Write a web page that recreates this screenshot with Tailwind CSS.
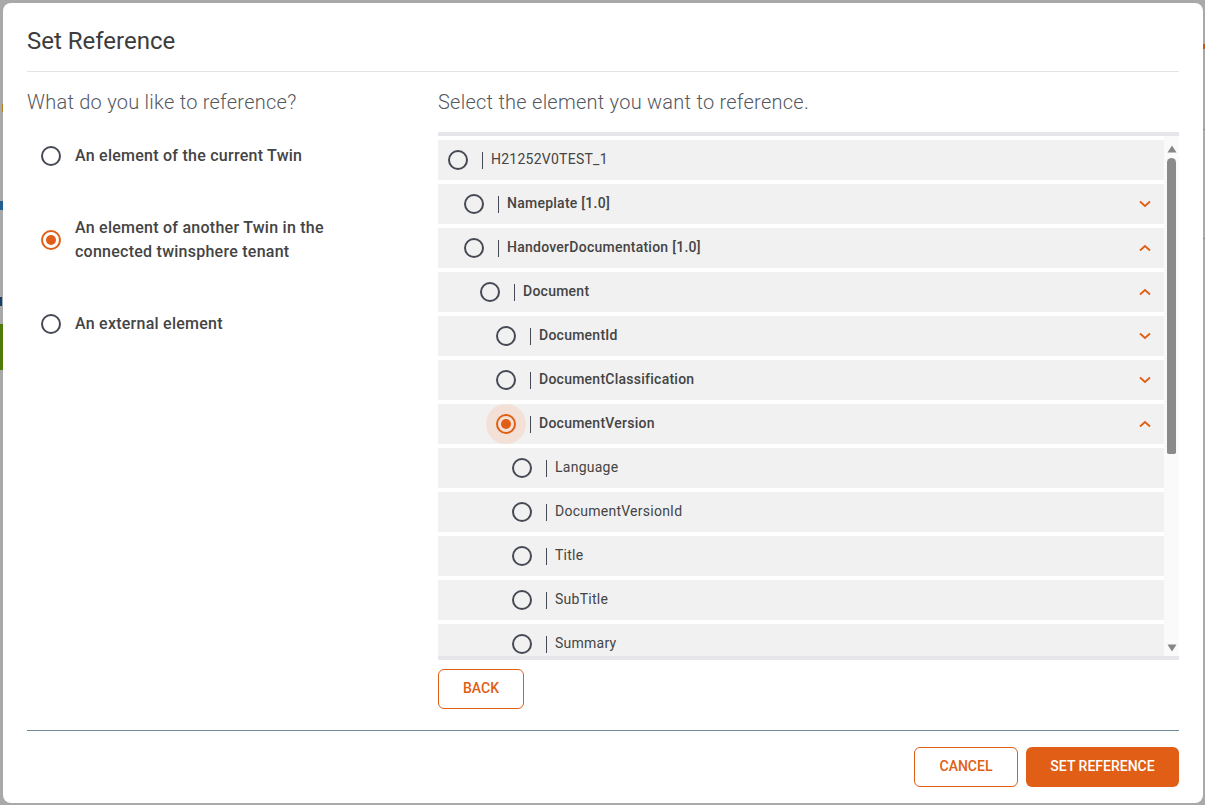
<!DOCTYPE html>
<html lang="en">
  <head>
    <meta charset="UTF-8" />
    <title>Set Reference</title>
    <script src="https://cdn.jsdelivr.net/npm/@tailwindcss/browser@4"></script>
  </head>
  <body class="bg-[#a9a9a9] font-['Roboto',sans-serif] text-[#444444] overflow-hidden">
    <!-- page behind the overlay -->
    <div class="absolute left-[2px] top-[104px] w-px h-[8px] bg-[#b5791f]"></div>
    <div class="absolute left-0 top-[201px] w-[3px] h-[9px] bg-[#1f5f94]"></div>
    <div class="absolute left-0 top-[297px] w-[2px] h-[9px] bg-[#14406a]"></div>
    <div class="absolute left-0 top-[324px] w-[3px] h-[46px] bg-[#4f7a0a]"></div>
    <div class="absolute left-[1203px] top-[44px] w-[2px] h-[5px] bg-[#c2561c]"></div>
    <div class="absolute left-[1203px] top-[129px] w-[2px] h-px bg-[#8f8f8f]"></div>
    <div class="absolute left-[1203px] top-[238px] w-[2px] h-px bg-[#8f8f8f]"></div>

    <div class="p-[3px] h-[805px] w-[1205px] flex">
      <div class="relative shrink-0 w-[1200px] h-[800px] bg-white rounded-[8px] px-6 flex flex-col">
        <h2 class="h-[69px] border-b border-[#e3e3e3] text-[24px] leading-[76px] text-[#3c3c3c]">Set Reference</h2>

        <div class="flex flex-1 min-h-0">
          <!-- left column -->
          <div class="w-[411px] shrink-0">
            <p class="mt-[18px] text-[20px] leading-6 font-light tracking-[0.25px] text-[#55585f]">What do you like to reference?</p>
            <div class="mt-[30px] flex items-center h-6 pl-[14px]">
              <span class="w-5 h-5 rounded-full border-2 border-[#454a54]"></span>
              <span class="ml-[14px] text-[16px] leading-6 font-medium tracking-[0.25px]">An element of the current Twin</span>
            </div>
            <div class="mt-[48px] flex items-center pl-[14px]">
              <span class="w-5 h-5 rounded-full border-2 border-[#e05e15] flex items-center justify-center"><span class="w-[10px] h-[10px] rounded-full bg-[#e05e15]"></span></span>
              <span class="ml-[14px] w-[290px] text-[16px] leading-6 font-medium tracking-[0.25px]">An element of another Twin in the connected twinsphere tenant</span>
            </div>
            <div class="mt-[48px] flex items-center h-6 pl-[14px]">
              <span class="w-5 h-5 rounded-full border-2 border-[#454a54]"></span>
              <span class="ml-[14px] text-[16px] leading-6 font-medium tracking-[0.25px]">An external element</span>
            </div>
          </div>

          <!-- right column -->
          <div class="flex-1 min-w-0 flex flex-col">
            <p class="mt-[18px] text-[20px] leading-6 font-light tracking-[0.25px] text-[#55585f]">Select the element you want to reference.</p>

            <div class="mt-[18px] flex h-[528px] border-y-4 border-[#e6e6ea]">
              <div class="flex-1 min-w-0 overflow-hidden pt-1 flex flex-col gap-1 text-[14px] tracking-[0.25px]">
                <div class="h-10 shrink-0 flex items-center bg-[#f1f1f1]">
                  <span class="w-10 h-10 flex items-center justify-center"><span class="w-5 h-5 rounded-full border-2 border-[#454a54]"></span></span>
                  <span class="ml-1 w-px h-[17px] bg-[#454a54]"></span>
                  <span class="ml-2 mb-[2px]">H21252V0TEST_1</span>
                </div>
                <div class="h-10 shrink-0 flex items-center bg-[#f1f1f1] pl-4 pr-[13px]">
                  <span class="w-10 h-10 flex items-center justify-center"><span class="w-5 h-5 rounded-full border-2 border-[#454a54]"></span></span>
                  <span class="ml-1 w-px h-[17px] bg-[#454a54]"></span>
                  <span class="ml-2 mb-[2px] font-medium">Nameplate [1.0]</span>
                  <svg class="ml-auto" width="12" height="8" viewBox="0 0 12 8" fill="none" stroke="#e05e15" stroke-width="1.8"><path d="M1 1.5 6 6l5-4.500"/></svg>
                </div>
                <div class="h-10 shrink-0 flex items-center bg-[#f1f1f1] pl-4 pr-[13px]">
                  <span class="w-10 h-10 flex items-center justify-center"><span class="w-5 h-5 rounded-full border-2 border-[#454a54]"></span></span>
                  <span class="ml-1 w-px h-[17px] bg-[#454a54]"></span>
                  <span class="ml-2 mb-[2px] font-medium">HandoverDocumentation [1.0]</span>
                  <svg class="ml-auto" width="12" height="8" viewBox="0 0 12 8" fill="none" stroke="#e05e15" stroke-width="1.8"><path d="M1 6.500 6 2l5 4.500"/></svg>
                </div>
                <div class="h-10 shrink-0 flex items-center bg-[#f1f1f1] pl-8 pr-[13px]">
                  <span class="w-10 h-10 flex items-center justify-center"><span class="w-5 h-5 rounded-full border-2 border-[#454a54]"></span></span>
                  <span class="ml-1 w-px h-[17px] bg-[#454a54]"></span>
                  <span class="ml-2 mb-[2px] font-medium">Document</span>
                  <svg class="ml-auto" width="12" height="8" viewBox="0 0 12 8" fill="none" stroke="#e05e15" stroke-width="1.8"><path d="M1 6.500 6 2l5 4.500"/></svg>
                </div>
                <div class="h-10 shrink-0 flex items-center bg-[#f1f1f1] pl-12 pr-[13px]">
                  <span class="w-10 h-10 flex items-center justify-center"><span class="w-5 h-5 rounded-full border-2 border-[#454a54]"></span></span>
                  <span class="ml-1 w-px h-[17px] bg-[#454a54]"></span>
                  <span class="ml-2 mb-[2px] font-medium">DocumentId</span>
                  <svg class="ml-auto" width="12" height="8" viewBox="0 0 12 8" fill="none" stroke="#e05e15" stroke-width="1.8"><path d="M1 1.5 6 6l5-4.500"/></svg>
                </div>
                <div class="h-10 shrink-0 flex items-center bg-[#f1f1f1] pl-12 pr-[13px]">
                  <span class="w-10 h-10 flex items-center justify-center"><span class="w-5 h-5 rounded-full border-2 border-[#454a54]"></span></span>
                  <span class="ml-1 w-px h-[17px] bg-[#454a54]"></span>
                  <span class="ml-2 mb-[2px] font-medium">DocumentClassification</span>
                  <svg class="ml-auto" width="12" height="8" viewBox="0 0 12 8" fill="none" stroke="#e05e15" stroke-width="1.8"><path d="M1 1.5 6 6l5-4.500"/></svg>
                </div>
                <div class="h-10 shrink-0 flex items-center bg-[#f1f1f1] pl-12 pr-[13px]">
                  <span class="w-10 h-10 rounded-full bg-[#f3e1d7] flex items-center justify-center"><span class="w-5 h-5 rounded-full border-2 border-[#e05e15] flex items-center justify-center"><span class="w-[10px] h-[10px] rounded-full bg-[#e05e15]"></span></span></span>
                  <span class="ml-1 w-px h-[17px] bg-[#454a54]"></span>
                  <span class="ml-2 mb-[2px] font-medium">DocumentVersion</span>
                  <svg class="ml-auto" width="12" height="8" viewBox="0 0 12 8" fill="none" stroke="#e05e15" stroke-width="1.8"><path d="M1 6.500 6 2l5 4.500"/></svg>
                </div>
                <div class="h-10 shrink-0 flex items-center bg-[#f1f1f1] pl-16">
                  <span class="w-10 h-10 flex items-center justify-center"><span class="w-5 h-5 rounded-full border-2 border-[#454a54]"></span></span>
                  <span class="ml-1 w-px h-[17px] bg-[#454a54]"></span>
                  <span class="ml-2 mb-[2px]">Language</span>
                </div>
                <div class="h-10 shrink-0 flex items-center bg-[#f1f1f1] pl-16">
                  <span class="w-10 h-10 flex items-center justify-center"><span class="w-5 h-5 rounded-full border-2 border-[#454a54]"></span></span>
                  <span class="ml-1 w-px h-[17px] bg-[#454a54]"></span>
                  <span class="ml-2 mb-[2px]">DocumentVersionId</span>
                </div>
                <div class="h-10 shrink-0 flex items-center bg-[#f1f1f1] pl-16">
                  <span class="w-10 h-10 flex items-center justify-center"><span class="w-5 h-5 rounded-full border-2 border-[#454a54]"></span></span>
                  <span class="ml-1 w-px h-[17px] bg-[#454a54]"></span>
                  <span class="ml-2 mb-[2px]">Title</span>
                </div>
                <div class="h-10 shrink-0 flex items-center bg-[#f1f1f1] pl-16">
                  <span class="w-10 h-10 flex items-center justify-center"><span class="w-5 h-5 rounded-full border-2 border-[#454a54]"></span></span>
                  <span class="ml-1 w-px h-[17px] bg-[#454a54]"></span>
                  <span class="ml-2 mb-[2px]">SubTitle</span>
                </div>
                <div class="h-10 shrink-0 flex items-center bg-[#f1f1f1] pl-16">
                  <span class="w-10 h-10 flex items-center justify-center"><span class="w-5 h-5 rounded-full border-2 border-[#454a54]"></span></span>
                  <span class="ml-1 w-px h-[17px] bg-[#454a54]"></span>
                  <span class="ml-2 mb-[2px]">Summary</span>
                </div>
              </div>

              <!-- scrollbar -->
              <div class="w-[15px] shrink-0 bg-[#fafafa] flex flex-col items-center">
                <svg class="mt-[9px]" width="10" height="8" viewBox="0 0 10 8" fill="#868686"><path d="M5 .5 9.500 7.500H.5z"/></svg>
                <div class="mt-[5px] w-[9px] h-[296px] rounded-t-[5px] rounded-b-[2px] bg-[#8a8a8a]"></div>
                <svg class="mt-auto mb-[4px]" width="10" height="8" viewBox="0 0 10 8" fill="#868686"><path d="M5 7.500 9.500 .5H.5z"/></svg>
              </div>
            </div>

            <button class="mt-[9px] pb-[2px] w-[86px] h-10 rounded-[6px] border border-[#e05e15] text-[#e05e15] text-[14px] font-medium">BACK</button>
          </div>
        </div>

        <div class="h-[73px] border-t border-[#6f8b99] flex items-start justify-end gap-2 pt-4">
          <button class="pb-[2px] w-[104px] h-10 rounded-[6px] border border-[#e05e15] text-[#e05e15] text-[14px] font-medium">CANCEL</button>
          <button class="pb-[2px] w-[153px] h-10 rounded-[6px] bg-[#e05e15] text-white text-[14px] font-medium">SET REFERENCE</button>
        </div>
      </div>
    </div>
  </body>
</html>
